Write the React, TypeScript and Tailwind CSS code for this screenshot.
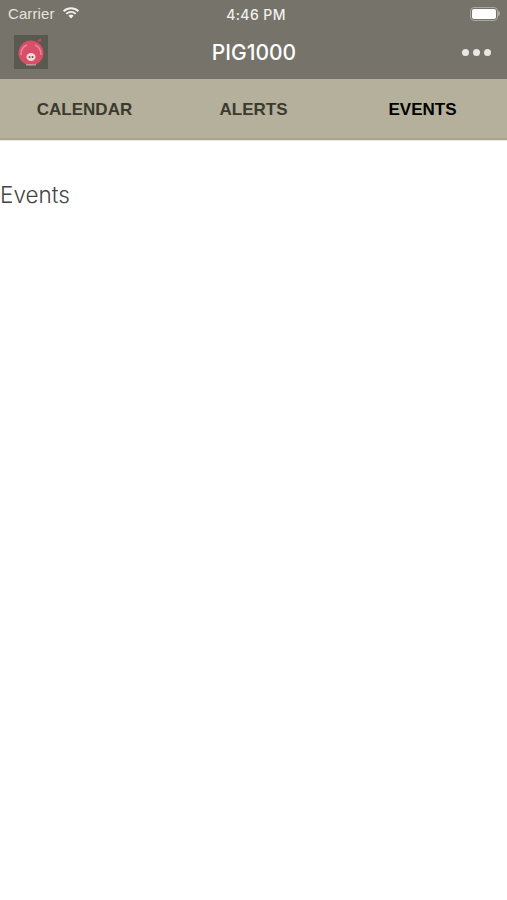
const font = "font-['Liberation_Sans',Arial,sans-serif]";

function Wifi() {
  return (
    <svg width="18" height="12" viewBox="0 0 18 13" className="ml-[7px] mb-[2px]">
      <path d="M1 4.6a11.4 11.4 0 0 1 16 0" fill="none" stroke="#f1f0ec" strokeWidth="2" />
      <path d="M3.9 7.4a7.3 7.3 0 0 1 10.2 0" fill="none" stroke="#f1f0ec" strokeWidth="2" />
      <path d="M6.2 9.4a4 4 0 0 1 5.6 0L9 12.4z" fill="#f1f0ec" />
    </svg>
  );
}

function Battery() {
  return (
    <div className="flex items-center">
      <div className="w-[28px] h-[14px] rounded-[4px] border border-[#a9a8a0] p-[1px]">
        <div className="w-full h-full rounded-[2px] bg-white" />
      </div>
      <div className="w-[2px] h-[5px] rounded-r-sm bg-[#a9a8a0]" />
    </div>
  );
}

function PigLogo() {
  return (
    <div className="w-[34px] h-[34px] mb-[2px] bg-[#5a5950] flex items-center justify-center">
      <svg width="34" height="34" viewBox="0 0 34 34">
        <path d="M23 6l4-3 0 4z" fill="#a8566a" />
        <circle cx="17" cy="18" r="12.5" fill="#d94f69" />
        <path d="M7 20a10 10 0 0 1 6-10M27 20a10 10 0 0 0-6-10" stroke="#ea8595" strokeWidth="1.5" fill="none" />
        <ellipse cx="17" cy="22" rx="4.5" ry="4" fill="#f3ddd6" />
        <circle cx="15.5" cy="22" r="1" fill="#7a4a4c" />
        <circle cx="18.5" cy="22" r="1" fill="#7a4a4c" />
        <rect x="12" y="29" width="10" height="1.5" fill="#b99a95" />
      </svg>
    </div>
  );
}

function Tab({ label, active }: { label: string; active?: boolean }) {
  return (
    <div className={`flex-1 pt-[2px] text-center text-[17px] font-bold ${active ? "text-black" : "text-[#3c3a2e]"}`}>
      {label}
    </div>
  );
}

export default function App() {
  return (
    <div className={`${font} min-h-[900px] bg-white`}>
      <div className="h-[79px] bg-[#75736a] text-white">
        <div className="h-[27px] pl-[8px] pr-[7px] flex items-center justify-between relative">
          <div className="flex items-center pt-[1px] text-[15px] tracking-[0.1px] text-[#e6e5df]">
            Carrier
            <Wifi />
          </div>
          <div className="absolute inset-x-0 pl-[5px] pt-[1px] text-center text-[14px] tracking-[0.4px] font-['Inter',sans-serif] font-medium text-[#f1f0ec]">4:46 PM</div>
          <Battery />
        </div>
        <div className="h-[52px] pl-[14px] pr-[16px] flex items-center justify-between relative">
          <PigLogo />
          <div className="absolute inset-x-0 pl-[1px] text-center text-[21px] font-['Inter',sans-serif] font-medium">PIG1000</div>
          <div className="flex gap-[4px] mb-[2px]">
            <div className="w-[7px] h-[7px] rounded-full bg-[#e8e8e3]" />
            <div className="w-[7px] h-[7px] rounded-full bg-[#e8e8e3]" />
            <div className="w-[7px] h-[7px] rounded-full bg-[#e8e8e3]" />
          </div>
        </div>
      </div>
      <div className="h-[61px] bg-[#b4b09b] border-b-2 border-[#a8a593] flex items-center">
        <Tab label="CALENDAR" />
        <Tab label="ALERTS" />
        <Tab label="EVENTS" active />
      </div>
      <div className="h-[1px] bg-[#e8e7e2]" />
      <div className="pt-[40px] text-[22.5px] leading-[28px] text-[#444] font-['Inter',sans-serif] font-light">Events</div>
    </div>
  );
}
